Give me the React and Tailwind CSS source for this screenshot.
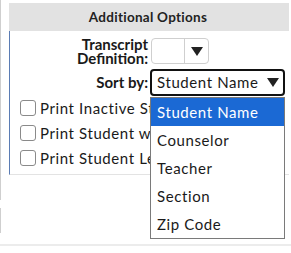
import React from "react";

function Tri() {
  return (
    <svg width="12" height="9" viewBox="0 0 12 9" className="block">
      <polygon points="0,0 12,0 6,9" fill="#222" />
    </svg>
  );
}

export default function App() {
  const font = { fontFamily: "Lato, 'Noto Sans', sans-serif" };
  const options = ["Student Name", "Counselor", "Teacher", "Section", "Zip Code"];
  return (
    <div className="w-[291px] h-[253px] bg-white relative overflow-hidden flex text-[#1a1a1a]" style={font}>
      <div className="w-[2px] flex flex-col shrink-0">
        <div className="h-[200px] w-px bg-[#cfcfcf]" />
        <div className="h-[8px]" />
        <div className="h-[25px] w-px bg-[#cfcfcf]" />
      </div>
      <div className="flex-1 flex flex-col">
        <div className="flex pl-[7px] pt-[3px]">
          <div className="flex-1 flex flex-col">
            <div className="h-[28px] bg-[#e2e2e2] flex items-center justify-center text-[13.5px] font-bold tracking-[0.02em] text-[#222] pr-[2px]">
              Additional Options
            </div>
            <div className="h-[144px] border-l border-l-[#5b7cb4] border-b border-b-[#e3e3e3] flex flex-col pt-[6px]">
              <div className="flex items-center">
                <div className="w-[139px] text-right text-[15px] font-bold leading-[14px] pr-[1px]">
                  Transcript<br />Definition:
                </div>
                <div className="ml-[2px] w-[58px] h-[26px] border border-[#cfcfcf] rounded-[4px] flex">
                  <div className="w-[33px] border-r border-[#cfcfcf]" />
                  <div className="flex-1 flex items-center justify-center"><Tri /></div>
                </div>
              </div>
              <div className="flex items-center mt-[4px]">
                <div className="w-[139px] text-right text-[15px] font-bold pr-[1px]">Sort by:</div>
                <div className="ml-[1px] w-[135px] h-[27px] border-2 border-[#111] rounded-[4px] flex items-center justify-between pl-[5px] pr-[4px] text-[15px] tracking-[0.04em]">
                  <span>Student Name</span>
                  <Tri />
                </div>
              </div>
              <div className="flex flex-col mt-[4px] pl-[10px] gap-[9px]">
                {["Print Inactive Students", "Print Student w/o Grades", "Print Student Legal Name"].map((t) => (
                  <div key={t} className="flex items-center h-[16px]">
                    <div className="w-[16px] h-[16px] border border-[#8a8a8a] rounded-[3px] bg-white" />
                    <span className="ml-[4px] text-[15px] tracking-[0.04em] whitespace-nowrap">{t}</span>
                  </div>
                ))}
              </div>
            </div>
          </div>
          <div className="w-[2px]" />
        </div>
        <div className="flex-1" />
        <div className="h-[2px] bg-[#ececec] -ml-[2px] mb-[7px]" />
      </div>
      <div className="absolute left-[150px] top-[97px] w-[135px] border border-[#7a7a7a] bg-white flex flex-col text-[15px] tracking-[0.04em]">
        {options.map((o, i) => (
          <div key={o} className={"h-[28px] flex items-center pl-[6px] " + (i === 0 ? "bg-[#1b69d4] text-white" : "text-[#1a1a1a]")}>
            {o}
          </div>
        ))}
      </div>
    </div>
  );
}
